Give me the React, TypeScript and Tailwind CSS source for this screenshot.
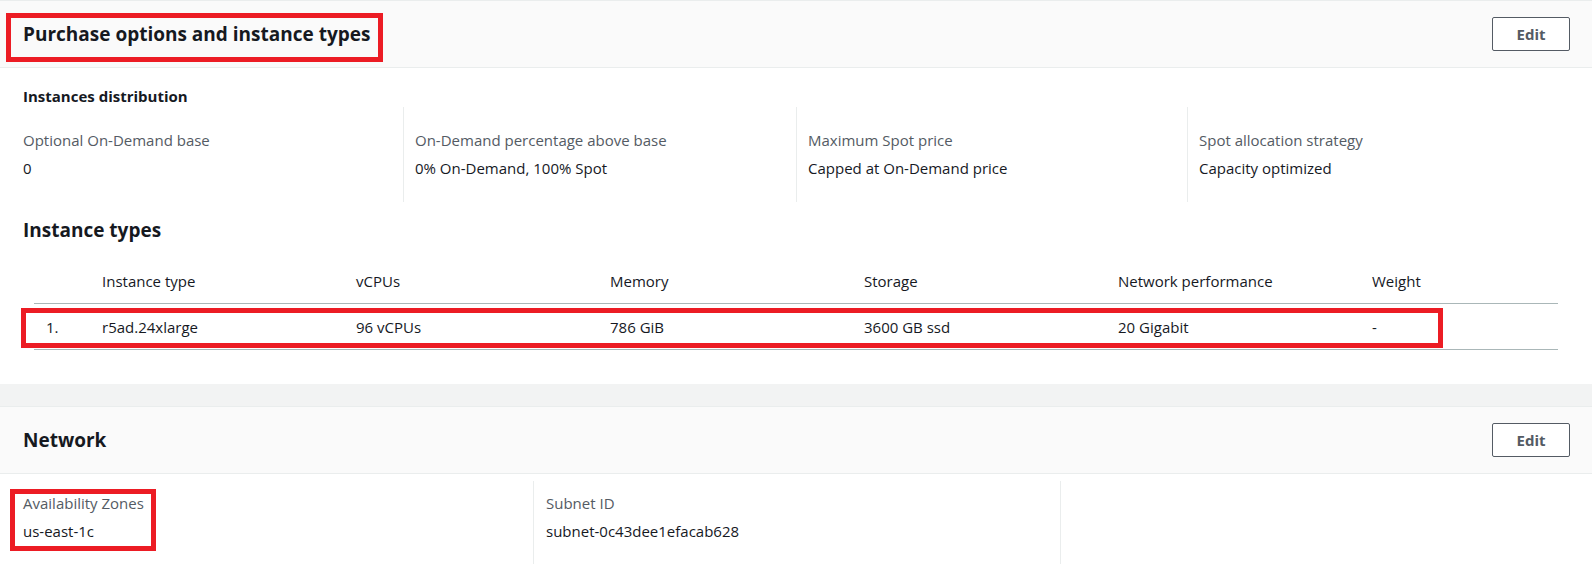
import React from "react";

const font = "font-['Open_Sans','Noto_Sans',Arial,sans-serif]";

const distribution = [
  { label: "Optional On-Demand base", value: "0" },
  { label: "On-Demand percentage above base", value: "0% On-Demand, 100% Spot" },
  { label: "Maximum Spot price", value: "Capped at On-Demand price" },
  { label: "Spot allocation strategy", value: "Capacity optimized" },
];

const columns = ["", "Instance type", "vCPUs", "Memory", "Storage", "Network performance", "Weight"];
const rows = [["1.", "r5ad.24xlarge", "96 vCPUs", "786 GiB", "3600 GB ssd", "20 Gigabit", "-"]];

function EditButton() {
  return (
    <button className="w-[78px] h-[34px] border border-[#545b64] rounded-[2px] bg-white text-[#545b64] text-[15px] font-bold">
      Edit
    </button>
  );
}

function Highlight({ className }: { className: string }) {
  // red annotation frame drawn over the content
  return <span className={`pointer-events-none absolute border-[5px] border-[#ec1c24] ${className}`} />;
}

export default function App() {
  return (
    <div className={`w-[1592px] h-[564px] overflow-hidden bg-[#f2f3f3] text-[#16191f] ${font}`}>
      <section className="bg-white border-t border-[#eaeded]">
        <header className="relative h-[67px] bg-[#fafafa] border-b border-[#eaeded] flex items-center justify-between pl-[23px] pr-[22px]">
          <h2 className="text-[19px] font-bold leading-6">Purchase options and instance types</h2>
          <EditButton />
          <Highlight className="left-[6px] top-[12px] w-[377px] h-[49px]" />
        </header>

        <div className="px-[23px] pt-[18px] pb-[34px]">
          <h3 className="text-[15px] font-bold leading-5">Instances distribution</h3>
          <div className="mt-px grid grid-cols-[380px_393px_391px_1fr]">
            {distribution.map((d, i) => (
              <div
                key={d.label}
                className={`pt-[23px] pb-[24px] text-[15px] leading-5 ${i > 0 ? "border-l border-[#eaeded] pl-[11px]" : ""}`}
              >
                <div className="text-[#545b64]">{d.label}</div>
                <div className="mt-2">{d.value}</div>
              </div>
            ))}
          </div>

          <h3 className="mt-4 text-[19px] font-bold leading-6">Instance types</h3>

          <div className="relative mt-[18px] ml-[11px] w-[1524px] text-[15px] leading-5">
            <div className="grid grid-cols-[56px_254px_254px_254px_254px_254px_1fr] border-b border-[#aab7b8]">
              {columns.map((c, i) => (
                <div key={i} className="pl-3 pt-[11px] pb-3">
                  {c}
                </div>
              ))}
            </div>
            {rows.map((r) => (
              <div key={r[1]} className="grid grid-cols-[56px_254px_254px_254px_254px_254px_1fr] border-b border-[#aab7b8]">
                {r.map((cell, i) => (
                  <div key={i} className="pl-3 pt-[13px] pb-3">
                    {cell}
                  </div>
                ))}
              </div>
            ))}
            <Highlight className="left-[-13px] top-[48px] w-[1422px] h-[40px]" />
          </div>
        </div>
      </section>

      <section className="mt-[22px] bg-white border-t border-[#eaeded]">
        <header className="h-[67px] bg-[#fafafa] border-b border-[#eaeded] flex items-center justify-between pl-[23px] pr-[22px]">
          <h2 className="text-[19px] font-bold leading-6">Network</h2>
          <EditButton />
        </header>
        <div className="relative px-[23px] pt-[7px]">
          <div className="grid grid-cols-[510px_527px_1fr] text-[15px] leading-5">
            <div className="pt-[12px] pb-6">
              <div className="text-[#545b64]">Availability Zones</div>
              <div className="mt-[8px]">us-east-1c</div>
            </div>
            <div className="pt-[12px] pb-6 border-l border-[#eaeded] pl-3">
              <div className="text-[#545b64]">Subnet ID</div>
              <div className="mt-[8px]">subnet-0c43dee1efacab628</div>
            </div>
            <div className="border-l border-[#eaeded]" />
          </div>
          <Highlight className="left-[10px] top-[15px] w-[146px] h-[62px]" />
        </div>
      </section>
    </div>
  );
}
